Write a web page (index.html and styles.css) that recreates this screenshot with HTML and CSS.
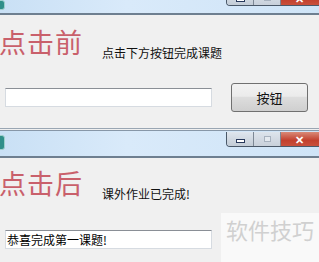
FILE: index.html
```html
<!DOCTYPE html>
<html lang="zh">
<head>
<meta charset="utf-8">
<link rel="stylesheet" href="styles.css">
</head>
<body>
<div class="page">
  <section class="window win-before">
    <div class="titlebar">
      <span class="app-icon"></span>
      <div class="caption-buttons">
        <span class="cbtn cbtn-min"><span class="min-glyph"></span></span>
        <span class="cbtn cbtn-max"><span class="max-glyph"></span></span>
        <span class="cbtn cbtn-close">✕</span>
      </div>
    </div>
    <div class="client">
      <div class="row-top">
        <span class="big-label">点击前</span>
        <span class="msg">点击下方按钮完成课题</span>
      </div>
      <div class="row-bottom">
        <div class="textbox"></div>
        <button class="push">按钮</button>
      </div>
    </div>
  </section>
  <section class="window win-after">
    <div class="titlebar">
      <span class="app-icon"></span>
      <div class="caption-buttons">
        <span class="cbtn cbtn-min"><span class="min-glyph"></span></span>
        <span class="cbtn cbtn-max"><span class="max-glyph"></span></span>
        <span class="cbtn cbtn-close">✕</span>
      </div>
    </div>
    <div class="client">
      <div class="row-top">
        <span class="big-label">点击后</span>
        <span class="msg">课外作业已完成!</span>
      </div>
      <div class="row-bottom">
        <div class="textbox">恭喜完成第一课题!</div>
      </div>
    </div>
    <div class="watermark">软件技巧</div>
  </section>
</div>
</body>
</html>
```
FILE: styles.css
```css
html, body {
  margin: 0;
  padding: 0;
  background: #f0f0f0;
}
.page {
  width: 319px;
  height: 262px;
  overflow: hidden;
  font-family: "Noto Sans CJK SC", "Noto Sans", sans-serif;
}
.window {
  position: relative;
  background: #f0f0f0;
}
.titlebar {
  position: relative;
  display: flex;
  justify-content: space-between;
  align-items: flex-start;
  background: linear-gradient(90deg, #c9e0f5 0%, #d9eafa 40%, #cfe4f7 100%);
  border-bottom: 2px solid #6e7f90;
  box-sizing: border-box;
}
.win-before .titlebar { height: 15px; }
.win-after .titlebar {
  height: 28px;
  border-top: 1px solid #8797a8;
  margin-top: 1px;
}
.app-icon {
  width: 6px;
  height: 10px;
  margin-left: -1px;
  background: #2f8f8a;
  border-radius: 0 3px 3px 0;
  border: 1px solid #9fd0cc;
  box-sizing: border-box;
}
.win-after .app-icon { margin-top: 4px; height: 15px; }
.caption-buttons {
  display: flex;
  height: 14px;
  border: 1px solid #4a5868;
  border-top: none;
  border-radius: 0 0 0 4px;
  overflow: hidden;
  margin-right: -20px;
}
.win-before .caption-buttons { margin-top: -9px; }
.win-after .caption-buttons { margin-top: 1px; }
.cbtn {
  display: flex;
  align-items: center;
  justify-content: center;
  box-sizing: border-box;
}
.cbtn-min {
  width: 27px;
  background: linear-gradient(#dfe6ee, #c3ccd6);
  border-right: 1px solid #7d8895;
}
.cbtn-max {
  width: 27px;
  background: linear-gradient(#dde4ec, #c8d0da);
  border-right: 1px solid #7d8895;
}
.cbtn-close {
  width: 57px;
  background: linear-gradient(#d98a78, #c2402e 60%, #c9503c);
  color: #ffffff;
  font-size: 11px;
  font-weight: bold;
  line-height: 14px;
  padding-right: 20px;
}
.min-glyph {
  width: 9px;
  height: 4px;
  border: 1px solid #27385a;
  background: #ffffff;
  box-sizing: border-box;
  margin-top: 3px;
}
.max-glyph {
  width: 7px;
  height: 6px;
  border: 1px solid #a8b2bf;
  background: #e4e9ef;
  box-sizing: border-box;
}
.client {
  position: relative;
  box-sizing: border-box;
}
.win-before .client {
  height: 114px;
  border-bottom: 1px solid #9aa6b3;
  padding-top: 12px;
}
.win-after .client {
  height: 104px;
  padding-top: 10px;
}
.row-top {
  display: flex;
  align-items: flex-start;
  height: 36px;
}
.big-label {
  font-size: 27px;
  line-height: 30px;
  color: #c9606b;
  margin-left: -1px;
  letter-spacing: 1px;
}
.msg {
  font-size: 12px;
  line-height: 14px;
  color: #111111;
  margin-left: 19px;
  margin-top: 19px;
}
.row-bottom {
  display: flex;
  align-items: center;
  padding-left: 5px;
  margin-top: 20px;
}
.win-after .row-bottom { margin-top: 26px; }
.textbox {
  width: 207px;
  height: 19px;
  box-sizing: border-box;
  background: #ffffff;
  border: 1px solid #d6dbe1;
  border-top-color: #8a8f96;
  font-size: 12px;
  line-height: 17px;
  color: #000000;
  padding-left: 1px;
}
.push {
  width: 77px;
  height: 29px;
  margin-left: 19px;
  border: 1px solid #707070;
  border-radius: 3px;
  background: linear-gradient(#f2f2f2 0%, #ebebeb 45%, #dddddd 50%, #cfcfcf 100%);
  font-family: "Noto Sans CJK SC", sans-serif;
  font-size: 13px;
  color: #111111;
  padding: 0;
}
.watermark {
  position: absolute;
  left: 221px;
  top: 83px;
  width: 98px;
  height: 50px;
  background: #f9f9f9;
  color: #d0d0d0;
  font-size: 22px;
  line-height: 32px;
  padding-left: 5px;
  box-sizing: border-box;
}
```
